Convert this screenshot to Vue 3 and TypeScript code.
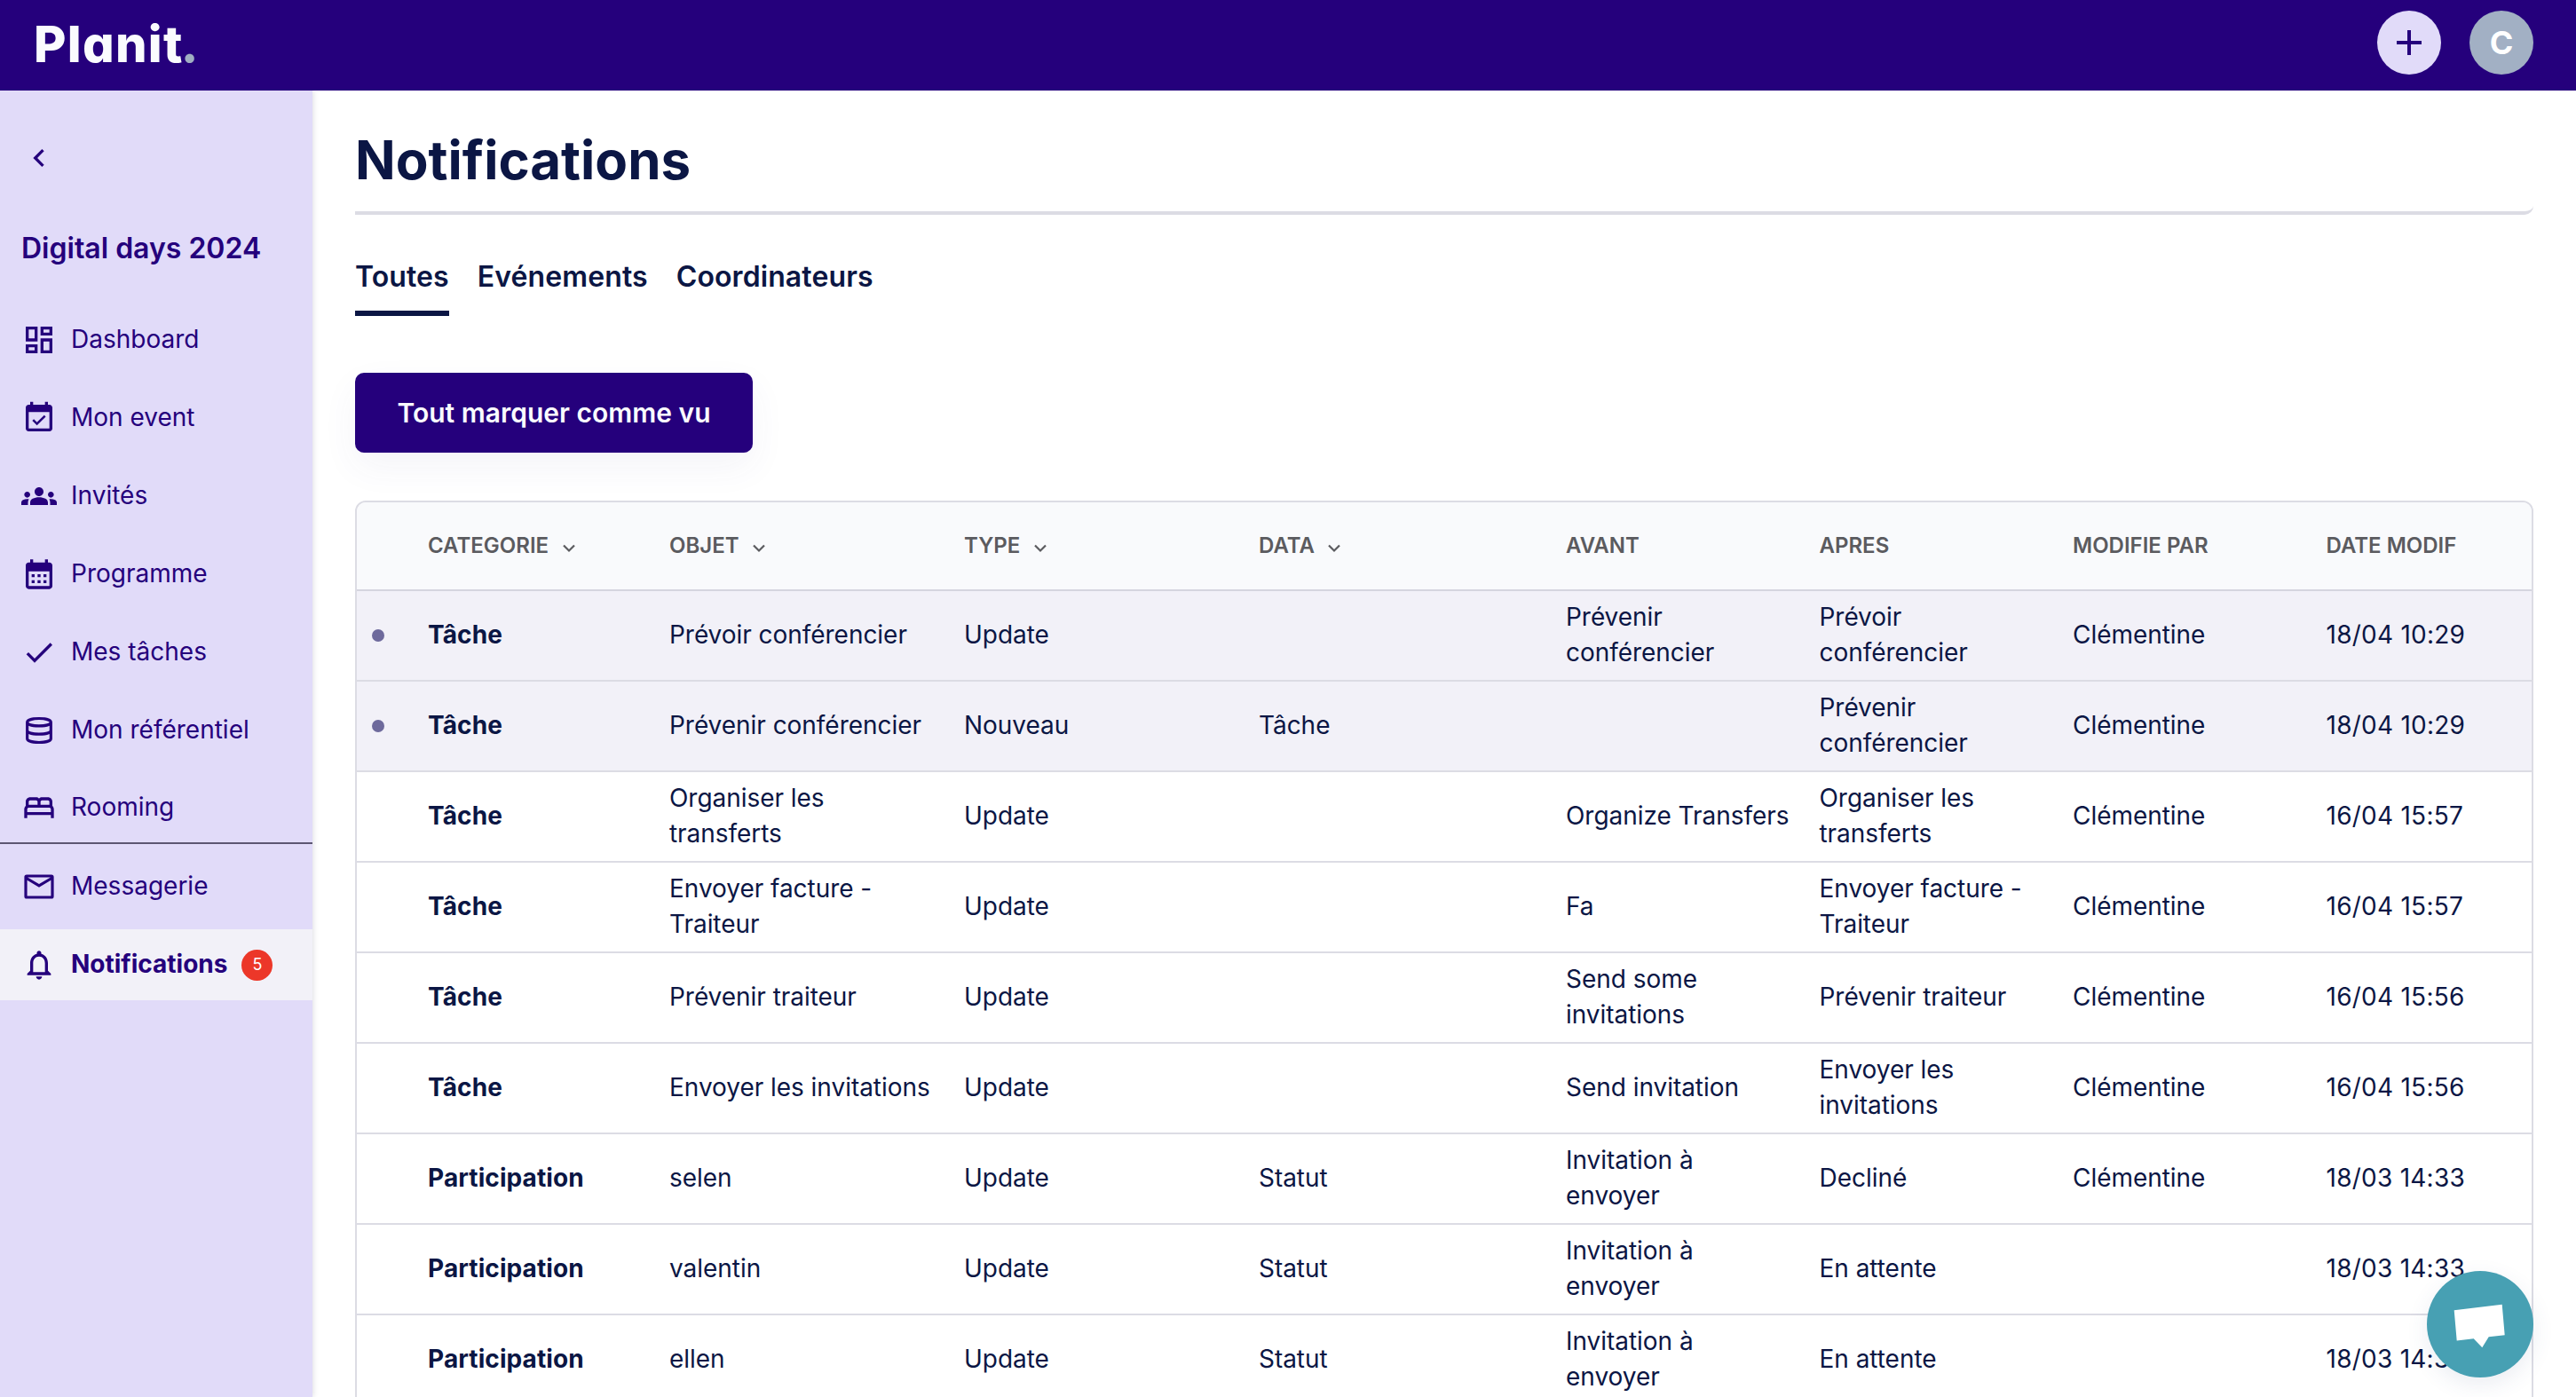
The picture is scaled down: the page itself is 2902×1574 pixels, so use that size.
<script setup lang="ts">
interface NavItem {
  label: string
  icon: string
  divided?: boolean
  active?: boolean
  badge?: number
}

interface Row {
  unread?: boolean
  categorie: string
  objet: string
  type: string
  data?: string
  avant?: string
  apres: string
  par?: string
  date: string
}

const icons: Record<string, string> = {
  dashboard:
    'M19 5v2h-4V5h4M9 5v6H5V5h4m10 8v6h-4v-6h4M9 17v2H5v-2h4M21 3h-8v6h8V3zM11 3H3v10h8V3zm10 8h-8v10h8V11zm-10 4H3v6h8v-6z',
  event:
    'M16.53 11.06L15.47 10l-4.88 4.88-2.12-2.12-1.06 1.06L10.59 17l5.94-5.94zM19 3h-1V1h-2v2H8V1H6v2H5c-1.11 0-1.99.9-1.99 2L3 19c0 1.1.89 2 2 2h14c1.1 0 2-.9 2-2V5c0-1.1-.9-2-2-2zm0 16H5V8h14v11z',
  groups:
    'M12 12.75c1.63 0 3.07.39 4.24.9 1.08.48 1.76 1.56 1.76 2.73V18H6v-1.61c0-1.18.68-2.26 1.76-2.73 1.17-.52 2.61-.91 4.24-.91zM4 13c1.1 0 2-.9 2-2s-.9-2-2-2-2 .9-2 2 .9 2 2 2zm1.13 1.1c-.37-.06-.74-.1-1.13-.1-.99 0-1.93.21-2.78.58C.48 14.9 0 15.62 0 16.43V18h4.5v-1.61c0-.83.23-1.61.63-2.29zM20 13c1.1 0 2-.9 2-2s-.9-2-2-2-2 .9-2 2 .9 2 2 2zm4 3.43c0-.81-.48-1.53-1.22-1.85-.85-.37-1.79-.58-2.78-.58-.39 0-.76.04-1.13.1.4.68.63 1.46.63 2.29V18H24v-1.57zM12 6c1.66 0 3 1.34 3 3s-1.34 3-3 3-3-1.34-3-3 1.34-3 3-3z',
  calendar:
    'M19 4h-1V2h-2v2H8V2H6v2H5c-1.11 0-1.99.9-1.99 2L3 20c0 1.1.89 2 2 2h14c1.1 0 2-.9 2-2V6c0-1.1-.9-2-2-2zm0 16H5V10h14v10zM9 14H7v-2h2v2zm4 0h-2v-2h2v2zm4 0h-2v-2h2v2zm-8 4H7v-2h2v2zm4 0h-2v-2h2v2zm4 0h-2v-2h2v2z',
  check: 'M9 16.17L4.83 12l-1.42 1.41L9 19 21 7l-1.41-1.41z',
  bed: 'M21 10.78V8c0-1.65-1.35-3-3-3h-4c-.77 0-1.47.3-2 .78-.53-.48-1.23-.78-2-.78H6C4.35 5 3 6.35 3 8v2.78c-.61.55-1 1.34-1 2.22v6h2v-2h16v2h2v-6c0-.88-.39-1.67-1-2.22zM14 7h4c.55 0 1 .45 1 1v2h-6V8c0-.55.45-1 1-1zM5 8c0-.55.45-1 1-1h4c.55 0 1 .45 1 1v2H5V8zm15 7H4v-2c0-.55.45-1 1-1h14c.55 0 1 .45 1 1v2z',
  bell: 'M12 22c1.1 0 2-.9 2-2h-4c0 1.1.9 2 2 2zm6-6v-5c0-3.07-1.64-5.64-4.5-6.32V4c0-.83-.67-1.5-1.5-1.5s-1.5.67-1.5 1.5v.68C7.63 5.36 6 7.92 6 11v5l-2 2v1h16v-1l-2-2zm-2 1H8v-6c0-2.48 1.51-4.5 4-4.5s4 2.02 4 4.5v6z',
}

const lineIcons: Record<string, string> = {
  database:
    'M4 6.4c0-1.5 3.6-2.5 8-2.5s8 1 8 2.5-3.6 2.5-8 2.5-8-1-8-2.5zM4 6.4v11.2c0 1.5 3.6 2.5 8 2.5s8-1 8-2.5V6.4M4 12c0 1.5 3.6 2.5 8 2.5s8-1 8-2.5',
  mail: 'M3.6 4.8h16.8a.6.6 0 0 1 .6.6v13.2a.6.6 0 0 1-.6.6H3.6a.6.6 0 0 1-.6-.6V5.4a.6.6 0 0 1 .6-.6zM3 6l9 5.3L21 6',
}

const nav: NavItem[] = [
  { label: 'Dashboard', icon: 'dashboard' },
  { label: 'Mon event', icon: 'event' },
  { label: 'Invités', icon: 'groups' },
  { label: 'Programme', icon: 'calendar' },
  { label: 'Mes tâches', icon: 'check' },
  { label: 'Mon référentiel', icon: 'database' },
  { label: 'Rooming', icon: 'bed', divided: true },
  { label: 'Messagerie', icon: 'mail' },
  { label: 'Notifications', icon: 'bell', active: true, badge: 5 },
]

const tabs = ['Toutes', 'Evénements', 'Coordinateurs']

const columns = [
  { label: 'CATEGORIE', sortable: true },
  { label: 'OBJET', sortable: true },
  { label: 'TYPE', sortable: true },
  { label: 'DATA', sortable: true },
  { label: 'AVANT', sortable: false },
  { label: 'APRES', sortable: false },
  { label: 'MODIFIE PAR', sortable: false },
  { label: 'DATE MODIF', sortable: false },
]

const rows: Row[] = [
  { unread: true, categorie: 'Tâche', objet: 'Prévoir conférencier', type: 'Update', avant: 'Prévenir\nconférencier', apres: 'Prévoir\nconférencier', par: 'Clémentine', date: '18/04 10:29' },
  { unread: true, categorie: 'Tâche', objet: 'Prévenir conférencier', type: 'Nouveau', data: 'Tâche', apres: 'Prévenir\nconférencier', par: 'Clémentine', date: '18/04 10:29' },
  { categorie: 'Tâche', objet: 'Organiser les\ntransferts', type: 'Update', avant: 'Organize Transfers', apres: 'Organiser les\ntransferts', par: 'Clémentine', date: '16/04 15:57' },
  { categorie: 'Tâche', objet: 'Envoyer facture -\nTraiteur', type: 'Update', avant: 'Fa', apres: 'Envoyer facture -\nTraiteur', par: 'Clémentine', date: '16/04 15:57' },
  { categorie: 'Tâche', objet: 'Prévenir traiteur', type: 'Update', avant: 'Send some\ninvitations', apres: 'Prévenir traiteur', par: 'Clémentine', date: '16/04 15:56' },
  { categorie: 'Tâche', objet: 'Envoyer les invitations', type: 'Update', avant: 'Send invitation', apres: 'Envoyer les\ninvitations', par: 'Clémentine', date: '16/04 15:56' },
  { categorie: 'Participation', objet: 'selen', type: 'Update', data: 'Statut', avant: 'Invitation à\nenvoyer', apres: 'Decliné', par: 'Clémentine', date: '18/03 14:33' },
  { categorie: 'Participation', objet: 'valentin', type: 'Update', data: 'Statut', avant: 'Invitation à\nenvoyer', apres: 'En attente', date: '18/03 14:33' },
  { categorie: 'Participation', objet: 'ellen', type: 'Update', data: 'Statut', avant: 'Invitation à\nenvoyer', apres: 'En attente', date: '18/03 14:33' },
]
</script>

<template>
  <div class="app">
    <header class="topbar">
      <div class="logo">Planit<span class="logo-dot">.</span></div>
      <div class="actions">
        <button class="round add" aria-label="Ajouter">
          <svg width="48" height="48" viewBox="0 0 24 24"><path d="M19 13h-6v6h-2v-6H5v-2h6V5h2v6h6v2z" /></svg>
        </button>
        <div class="round avatar">C</div>
      </div>
    </header>

    <div class="body">
      <aside class="sidebar">
        <button class="back" aria-label="Retour">
          <svg width="40" height="40" viewBox="0 0 24 24"><path d="M15.41 7.41L14 6l-6 6 6 6 1.41-1.41L10.83 12z" /></svg>
        </button>
        <div class="event-name">Digital days 2024</div>
        <nav class="nav">
          <a v-for="item in nav" :key="item.label" class="nav-item" :class="{ active: item.active, divided: item.divided }">
            <svg v-if="icons[item.icon]" width="40" height="40" viewBox="0 0 24 24"><path :d="icons[item.icon]" /></svg>
            <svg v-else class="line" width="40" height="40" viewBox="0 0 24 24"><path :d="lineIcons[item.icon]" /></svg>
            <span class="nav-label">{{ item.label }}</span>
            <span v-if="item.badge" class="badge">{{ item.badge }}</span>
          </a>
        </nav>
      </aside>

      <main class="main">
        <div class="page-head"><h1>Notifications</h1></div>
        <div class="tabs">
          <a v-for="(tab, i) in tabs" :key="tab" class="tab" :class="{ current: i === 0 }">{{ tab }}</a>
        </div>
        <button class="mark-all">Tout marquer comme vu</button>

        <div class="table">
          <div class="tr thead">
            <span></span>
            <span v-for="col in columns" :key="col.label" class="th">
              {{ col.label }}
              <svg v-if="col.sortable" width="14" height="10" viewBox="0 0 14 10"><path d="M1 1.5l6 6 6-6" /></svg>
            </span>
          </div>
          <div v-for="(row, i) in rows" :key="i" class="tr" :class="{ unread: row.unread }">
            <span><i v-if="row.unread" class="dot"></i></span>
            <span class="td cat">{{ row.categorie }}</span>
            <span class="td">{{ row.objet }}</span>
            <span class="td">{{ row.type }}</span>
            <span class="td">{{ row.data }}</span>
            <span class="td">{{ row.avant }}</span>
            <span class="td">{{ row.apres }}</span>
            <span class="td">{{ row.par }}</span>
            <span class="td date">{{ row.date }}</span>
          </div>
        </div>
      </main>
    </div>

    <button class="chat" aria-label="Discussion">
      <svg width="120" height="120" viewBox="0 0 120 120">
        <path d="M30.7 44.2 84.7 37.8 87.7 72.2 69.7 74.3 62.3 86.3 52.7 76.3 33.7 78.5z" />
      </svg>
    </button>
  </div>
</template>

<style>
body {
  overflow: hidden;
}
</style>

<style scoped>
.app {
  height: 100vh;
  overflow: hidden;
  display: flex;
  flex-direction: column;
  background: #fff;
  color: #0b1644;
  font-family: Inter, 'Liberation Sans', sans-serif;
  font-size: 28px;
}
.app * {
  box-sizing: border-box;
}
button {
  border: 0;
  padding: 0;
  background: none;
  font-family: inherit;
}
svg {
  display: block;
  flex: none;
  fill: currentColor;
}
.topbar {
  flex: none;
  height: 102px;
  padding: 12px 48px 0 38px;
  display: flex;
  justify-content: space-between;
  align-items: flex-start;
  background: #25007c;
  position: relative;
  z-index: 1;
}
.logo {
  font-size: 56px;
  line-height: 76px;
  font-weight: 800;
  letter-spacing: 1.3px;
  font-feature-settings: 'cv11';
  color: #fafbfe;
}
.logo-dot {
  margin-left: -3px;
  color: #a0aec2;
}
.actions {
  display: flex;
  gap: 32px;
}
.round {
  width: 72px;
  height: 72px;
  border-radius: 50%;
  display: flex;
  align-items: center;
  justify-content: center;
}
.add {
  background: #e1dbf9;
  color: #25007c;
}
.avatar {
  background: #a2b0c4;
  color: #fff;
  font-size: 36px;
  font-weight: 700;
}
.body {
  flex: 1;
  min-height: 0;
  display: flex;
}
.sidebar {
  flex: none;
  width: 352px;
  padding-top: 56px;
  background: #e1dbf9;
  color: #25007c;
  box-shadow: 1px 0 6px rgba(20, 20, 50, 0.14);
}
.back {
  display: block;
  margin-left: 24px;
  color: inherit;
}
.event-name {
  margin: 62px 0 43px 24px;
  font-size: 32px;
  line-height: 40px;
  font-weight: 600;
}
.nav {
  display: flex;
  flex-direction: column;
  gap: 8px;
}
.nav-item {
  height: 80px;
  padding-left: 24px;
  display: flex;
  align-items: center;
}
.nav-item.divided {
  border-bottom: 2px solid #5c5672;
}
.nav-item.active {
  background: #f2f1f8;
  font-weight: 700;
}
.nav-label {
  margin-left: 16px;
  padding-bottom: 2px;
  line-height: 40px;
}
.line {
  fill: none;
  stroke: currentColor;
  stroke-width: 1.9;
}
.badge {
  width: 35px;
  height: 35px;
  margin-left: 16px;
  border-radius: 50%;
  background: #ec3729;
  color: #fff;
  font-size: 18px;
  line-height: 34px;
  font-weight: 400;
  text-align: center;
}
.main {
  flex: 1;
  min-width: 0;
  padding: 42px 48px 0;
}
.page-head {
  padding-bottom: 22px;
  border-bottom: 4px solid #dcdce4;
  border-bottom-right-radius: 10px;
}
h1 {
  margin: 0;
  font-size: 60px;
  line-height: 72px;
  font-weight: 700;
}
.tabs {
  margin-top: 50px;
  display: flex;
  gap: 32px;
}
.tab {
  padding-bottom: 18px;
  border-bottom: 6px solid transparent;
  font-size: 32px;
  line-height: 40px;
  font-weight: 600;
  letter-spacing: 0.1px;
}
.tab.current {
  border-bottom-color: #0b1644;
}
.mark-all {
  display: block;
  width: 448px;
  height: 90px;
  margin: 64px 0 54px;
  border-radius: 10px;
  background: #25007c;
  color: #fafbfe;
  font-size: 30px;
  font-weight: 600;
  box-shadow: 0 16px 40px rgba(60, 75, 130, 0.06);
}
.table {
  border: 2px solid #dcdce4;
  border-radius: 12px 12px 0 0;
  overflow: hidden;
  background: #fff;
}
.tr {
  height: 102px;
  display: grid;
  grid-template-columns: 80px 272px 332px 332px 346px 285.5px 285.5px 285.5px 1fr;
  align-items: center;
  border-bottom: 2px solid #dcdce4;
}
.tr.thead {
  height: 100px;
  background: #f9fafc;
  border-bottom-color: #d5d5df;
}
.tr.unread {
  background: #f2f1f8;
}
.th {
  display: flex;
  align-items: center;
  padding-bottom: 2px;
  font-size: 24px;
  font-weight: 600;
  color: #5b5b5f;
}
.th svg {
  margin: 8px 0 0 15.5px;
  fill: none;
  stroke: #5b5b5f;
  stroke-width: 2.2;
}
.td {
  padding-bottom: 2px;
  line-height: 40px;
  letter-spacing: -0.04px;
  white-space: pre;
}
.cat {
  font-weight: 700;
  letter-spacing: 0.1px;
}
.date {
  letter-spacing: 0.25px;
}
.dot {
  display: block;
  width: 14px;
  height: 14px;
  margin-left: 17px;
  border-radius: 50%;
  background: #6e6a9c;
}
.chat {
  position: fixed;
  right: 48px;
  bottom: 22px;
  width: 120px;
  height: 120px;
  border-radius: 50%;
  background: #47a0b3;
  color: #fff;
  box-shadow: 0 8px 24px rgba(60, 75, 130, 0.1);
}
</style>
